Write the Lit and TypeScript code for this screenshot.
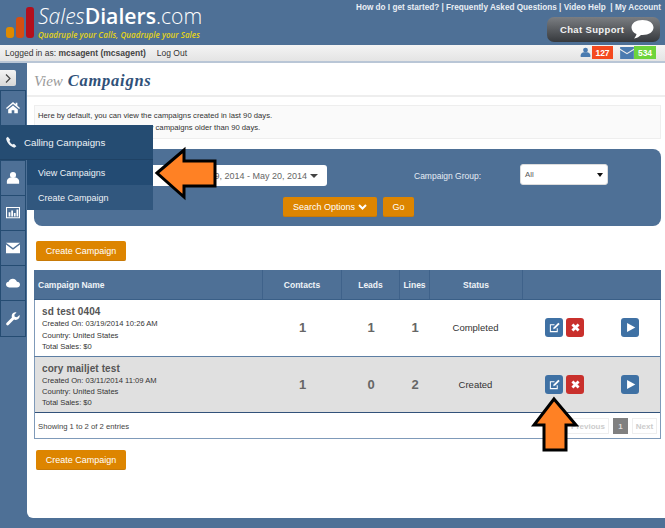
import { LitElement, html, css, svg } from "lit";
import { customElement } from "lit/decorators.js";

const I = {
  home: svg`<path d="M8 1 0 8l1 1.2L8 3.400l7 5.800L16 8l-3-2.600V2h-2v1.700z"/><path d="M2.500 9.600 8 5l5.500 4.600V14H9.500v-3.500h-3V14h-4z"/>`,
  phone: svg`<path d="M3.500 1 1.500 2.500C1 6 5.500 13 11.500 14.500L14 12.500 11 9.500 9.500 10.500C8 10 6 7.500 5.500 6L6.500 4.500z"/>`,
  user: svg`<circle cx="8" cy="4.500" r="3.500"/><path d="M1 14.500V12c0-3 3-4.500 4.500-4.500h5C12 7.500 15 9 15 12v2.500z"/>`,
  chart: svg`<path fill-rule="evenodd" d="M0 1h16v13H0zM1.200 2.200v10.600h13.600V2.200z"/><path d="M3 7h2v5H3zM6 5h2v7H6zM9 8h2v4H9zM12 4h2v8h-2z"/>`,
  mail: svg`<path d="M0 2h16L8 8z"/><path d="M0 4v10h16V4L8 10z"/>`,
  cloud: svg`<path d="M3.500 13C1.500 13 0 11.600 0 9.800S1.300 6.800 3 6.700C3.600 4.300 5.600 3 7.800 3c2.400 0 4.300 1.600 4.700 3.700 2 0 3.500 1.400 3.500 3.200S14.500 13 12.500 13z"/>`,
  wrench: svg`<path d="M15.500 3.500 12.500 6 10 5.500 9.500 3 12 .5C9.500-.300 6.500 1.500 6.500 4.500c0 .7.100 1.300.3 1.800L.8 12.300c-.8.8-.8 1.800-.1 2.500s1.700.7 2.500-.1l6-6c.5.200 1.100.3 1.800.3 3 0 5.300-2.800 4.500-5.500z"/>`,
};
const icon = (p: unknown) => html`<svg class="i" viewBox="0 0 16 16" fill="currentColor">${p}</svg>`;

const rows = [
  { n: "sd test 0404", d: "03/19/2014 10:26 AM", c: "1", le: "1", li: "1", s: "Completed", alt: false },
  { n: "cory mailjet test", d: "03/11/2014 11:09 AM", c: "1", le: "0", li: "2", s: "Created", alt: true },
];

@customElement("app-root")
export class AppRoot extends LitElement {
  static styles = css`
    :host { display: block; position: relative; width: 665px; height: 528px; overflow: hidden; background: #4e7096; font-family: "Liberation Sans", Arial, sans-serif; color: #333; }
    * { box-sizing: border-box; }
    .head { height: 45px; display: flex; justify-content: space-between; color: #fff; }
    .logo { display: flex; align-items: flex-end; gap: 2px; padding: 8px 0 7px 6px; }
    .bar { width: 8px; border-radius: 3px; }
    .brand { margin: 0 0 0 2px; align-self: stretch; display: flex; flex-direction: column; }
    .word { font: 21.200px/24px "Open Sans", sans-serif; white-space: nowrap; margin-top: -4px; }
    .word i { font-weight: 300; } .word b { font-weight: 600; } .word span { font-weight: 300; }
    .tag { font: italic 600 8px/10px "Open Sans", sans-serif; color: #e6d516; white-space: nowrap; margin-top: 2px; letter-spacing: .05px; }
    .hr { display: flex; flex-direction: column; align-items: flex-end; padding: 3px 4px 0 0; }
    .links { font-size: 8.200px; font-weight: 700; line-height: 10px; color: #e9eef4; white-space: nowrap; }
    .chat { margin: 4px 1px 0 0; width: 113px; height: 25px; border-radius: 7px; background: linear-gradient(#7b7e82, #36393d); display: flex; align-items: center; padding-left: 13px; gap: 7px; font-size: 9.500px; font-weight: 700; color: #f2f2f2; letter-spacing: .35px; }
    .chat svg { width: 23px; height: 19px; }
    .sub { height: 18px; background: linear-gradient(#f4f4f4, #e4e4e4); border-bottom: 2px solid #b9c6d6; display: flex; align-items: center; padding: 0 9px 1px 5px; font-size: 8.500px; color: #333; }
    .sub b { font-weight: 700; color: #444; margin: 0 11px 0 0; }
    .stats { margin-left: auto; display: flex; align-items: center; }
    .stats svg { color: #4a7bb0; }
    .uico { width: 11px; height: 11px; margin-right: 1px; }
    .mico { width: 14px; height: 12px; margin-left: 7px; }
    .badge { height: 13px; width: 21px; color: #fff; font-weight: 700; font-size: 8.500px; display: grid; place-items: center; }
    .red { background: #f4491f; } .green { background: #6dd43c; width: 22px; }
    .body { display: flex; height: 455px; }
    .side { width: 27px; flex: none; padding-top: 7px; color: #fff; }
    .toggle { width: 16px; height: 16px; background: linear-gradient(#f4f4f4,#d8d8d8); border-radius: 0 2px 2px 0; display: grid; place-items: center; }
    .toggle svg { width: 6px; height: 9px; }
    .nav { margin-top: 4px; border: 1px solid #254c72; width: 26px; }
    .nav div { height: 35px; display: grid; place-items: center; border-bottom: 1px solid #254c72; }
    .nav div:last-child { border-bottom: 0; }
    .i { width: 14px; height: 14px; display: block; }
    .main { flex: 1; background: #fff; border-radius: 0 0 0 6px; padding: 0 5px 0 7px; height: 455px; }
    h1 { margin: 0 -5px 0 -7px; height: 34px; font: italic 700 16.500px/36px "Liberation Serif", serif; color: #2f5179; letter-spacing: .75px; border-bottom: 2px solid #eee; padding-left: 7px; }
    h1 span { font-weight: 400; font-size: 15px; letter-spacing: 0; color: #9a9a9a; }
    .info { margin-top: 8px; height: 34px; background: #fafafa; border: 1px solid #eee; padding: 4px 3px; font-size: 7.700px; line-height: 12px; white-space: nowrap; }
    .filter { position: relative; margin-top: 10px; height: 77px; background: #4e7096; border-radius: 8px; color: #e6edf4; font-size: 8.500px; }
    .f1 { display: flex; align-items: center; height: 48px; padding-top: 3px; }
    .date { margin-left: 100px; width: 193px; height: 21px; background: #fff; border-radius: 3px; color: #666; font-size: 9px; display: flex; align-items: center; justify-content: flex-end; padding-right: 9px; gap: 3px; margin-top: 2px; }
    .car { border-left: 4px solid transparent; border-right: 4px solid transparent; border-top: 4px solid #444; }
    .lab { margin-left: 87px; margin-top: 2px; width: 106px; white-space: nowrap; }
    .sel { width: 88px; height: 21px; background: #fff; border: 1px solid #ddd; border-radius: 3px; color: #555; font-size: 7.800px; display: flex; align-items: center; justify-content: space-between; padding: 0 4px; }
    .sel i { border-left: 3px solid transparent; border-right: 3px solid transparent; border-top: 4px solid #111; }
    .f2 { display: flex; justify-content: flex-start; padding-left: 249px; gap: 6px; }
    .btn { background: #dd8500; color: #fff; border-radius: 2px; height: 20px; display: inline-flex; align-items: center; justify-content: center; font-size: 9px; border-bottom: 1px solid #c87a08; white-space: nowrap; gap: 3px; }
    .btn svg { width: 9px; height: 6px; }
    .b-s { width: 94px; } .b-g { width: 31px; }
    .b-c { width: 90px; margin-left: 2px; display: flex; }
    .cw { height: 44px; padding-top: 15px; }
    .tbl { border: 1px solid #7f9ab9; border-top: 0; height: 169px; }
    .grid { display: grid; grid-template-columns: 229px 79px 58px 30px 93px 137px; margin-left: -1px; }
    .th { height: 30px; margin-right: -1px; background: #4e7096; border-bottom: 1px solid #3a5f87; color: #f0f4f8; font-weight: 700; font-size: 8.500px; }
    .th > div { display: grid; place-items: center; border-right: 1px solid #3f628a; }
    .th > div:first-child { place-items: center start; padding-left: 4px; }
    .th > div:last-child { border: 0; }
    .tr { height: 56.500px; border-bottom: 1px solid #5d7ea3; align-items: center; }
    .tr.alt { background: #e0e0e0; border-bottom: 1px solid #32527a; margin-left: 0; grid-template-columns: 228px 79px 58px 30px 93px 137px; }
    .nm { padding: 2px 0 0 8px; font-size: 7.600px; line-height: 11.300px; color: #333; }
    .alt .nm { padding-left: 7px; }
    .nm b { display: block; font-size: 10px; line-height: 13px; color: #555; letter-spacing: .1px; }
    .num { text-align: center; font-size: 13px; font-weight: 700; color: #666; }
    .st { text-align: center; font-size: 9.500px; color: #333; padding-right: 2px; }
    .acts { display: flex; align-items: center; padding-left: 22px; }
    .ab { width: 18px; height: 19px; border-radius: 3px; display: grid; place-items: center; color: #fff; margin-right: 3px; }
    .ab svg { width: 11px; height: 11px; }
    .blue { background: #3f71a4; } .rd { background: #c9302c; }
    .play { margin: 0 0 0 34px; }
    .ft { display: flex; justify-content: space-between; align-items: center; height: 26px; padding: 0 3px; font-size: 7.700px; color: #444; }
    .pg { display: flex; gap: 4px; align-items: center; font-size: 8px; font-weight: 700; color: #ccc; }
    .pg span { height: 16px; display: grid; place-items: center; border: 1px solid #eee; }
    .pg .pv { width: 42px; } .pg .nx { width: 25px; } .pg .cur { width: 15px; background: #808080; color: #ddd; border-color: #808080; }
    .cw2 { padding-top: 11px; }
    .fly { position: absolute; left: 0; top: 125px; width: 153px; color: #eef2f6; font-size: 9.700px; }
    .fh { height: 35px; background: #254c72; display: flex; align-items: center; padding-left: 5px; gap: 6px; border-bottom: 1px solid #1f4265; }
    .fh svg { width: 13px; height: 13px; }
    .fs { margin-left: 27px; width: 126px; font-size: 9px; }
    .fs div { height: 25px; display: flex; align-items: center; padding-left: 11px; background: #234b73; }
    .fs div + div { background: #31577e; }
    .arrow { position: absolute; overflow: visible; fill: #ff8124; stroke: #000; stroke-width: 3; stroke-linejoin: miter; }
  `;

  render() {
    return html`
      <div class="head">
        <div class="logo">
          <div class="bar" style="height:11px;background:#e08a00"></div>
          <div class="bar" style="height:21px;background:#d44f12"></div>
          <div class="bar" style="height:31px;background:#b30f1c"></div>
          <div class="brand">
            <div class="word"><i>Sales</i><b>Dialers</b><span>.com</span></div>
            <div class="tag">Quadruple your Calls, Quadruple your Sales</div>
          </div>
        </div>
        <div class="hr">
          <div class="links">How do I get started? | Frequently Asked Questions | Video Help &nbsp;| My Account</div>
          <div class="chat">Chat Support
            <svg viewBox="0 0 23 19" fill="#fff"><path d="M11.500 0C5 0 .5 3 .5 7.500c0 3 2 5.300 5 6.500-.3 1.500-1.200 3-2.500 4.500 3-.5 5.500-2 7-3.500h1.500C18 15 22.500 12 22.500 7.500S18 0 11.500 0z"/></svg>
          </div>
        </div>
      </div>
      <div class="sub">
        <span>Logged in as:&nbsp;</span><b>mcsagent (mcsagent)</b><span>Log Out</span>
        <div class="stats">
          <svg class="uico" viewBox="0 0 16 16" fill="currentColor">${I.user}</svg><div class="badge red">127</div>
          <svg class="mico" viewBox="0 0 16 14" fill="currentColor"><path d="M0 0h16v2L8 7 0 2z" /><path d="M0 3.500 8 8.500l8-5V14H0z"/></svg><div class="badge green">534</div>
        </div>
      </div>
      <div class="body">
        <div class="side">
          <div class="toggle"><svg viewBox="0 0 6 9" fill="none" stroke="#444" stroke-width="1.200"><path d="M1 .5 5 4.500 1 8.500"/></svg></div>
          <div class="nav">
            <div>${icon(I.home)}</div><div></div><div>${icon(I.user)}</div><div>${icon(I.chart)}</div>
            <div>${icon(I.mail)}</div><div>${icon(I.cloud)}</div><div>${icon(I.wrench)}</div>
          </div>
        </div>
        <div class="main">
          <h1><span>View</span> Campaigns</h1>
          <div class="info">Here by default, you can view the campaigns created in last 90 days.<br>Use the search option to view any campaigns older than 90 days.</div>
          <div class="filter">
            <div class="f1">
              <div class="date">Feb 19, 2014 - May 20, 2014 <span class="car"></span></div>
              <div class="lab">Campaign Group:</div>
              <div class="sel">All <i></i></div>
            </div>
            <div class="f2">
              <div class="btn b-s">Search Options <svg viewBox="0 0 9 6" fill="none" stroke="#fff" stroke-width="2"><path d="M1 1l3.500 3.500L8 1"/></svg></div>
              <div class="btn b-g">Go</div>
            </div>
          </div>
          <div class="cw"><div class="btn b-c">Create Campaign</div></div>
          <div class="tbl">
            <div class="grid th"><div>Campaign Name</div><div>Contacts</div><div>Leads</div><div>Lines</div><div>Status</div><div></div></div>
            ${rows.map(r => html`
              <div class="grid tr ${r.alt ? "alt" : ""}">
                <div class="nm"><b>${r.n}</b>Created On: ${r.d}<br>Country: United States<br>Total Sales: $0</div>
                <div class="num">${r.c}</div><div class="num">${r.le}</div><div class="num">${r.li}</div>
                <div class="st">${r.s}</div>
                <div class="acts">
                  <div class="ab blue"><svg viewBox="0 0 16 16" fill="none" stroke="#fff" stroke-width="1.500"><path d="M12 9v5H2V4h6"/><path d="M6 10.500 7 7.500 13.500 1l2 2L9 9.500z" fill="#fff" stroke="none"/></svg></div>
                  <div class="ab rd"><svg viewBox="0 0 16 16" fill="none" stroke="#fff" stroke-width="4"><path d="M3.500 3.500l9 9M12.500 3.500l-9 9"/></svg></div>
                  <div class="ab blue play"><svg viewBox="0 0 16 16" fill="#fff"><path d="M3 1.500 15 8 3 14.500z"/></svg></div>
                </div>
              </div>`)}
            <div class="ft"><span>Showing 1 to 2 of 2 entries</span>
              <div class="pg"><span class="pv">Previous</span><span class="cur">1</span><span class="nx">Next</span></div>
            </div>
          </div>
          <div class="cw2"><div class="btn b-c">Create Campaign</div></div>
        </div>
      </div>
      <div class="fly">
        <div class="fh">${icon(I.phone)}<span>Calling Campaigns</span></div>
        <div class="fs"><div>View Campaigns</div><div>Create Campaign</div></div>
      </div>
      <svg class="arrow" style="left:0;top:0" width="665" height="528"><polygon points="157,173 184,150 184,161 215,161 215,186 184,186 184,197"/><polygon points="554,399 576,425 566,425 566,450 544,450 544,425 534,425"/></svg>
    `;
  }
}
